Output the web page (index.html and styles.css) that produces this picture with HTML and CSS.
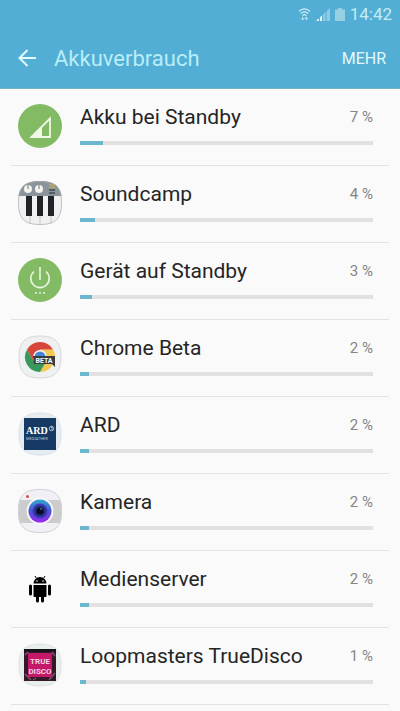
FILE: index.html
```html
<!DOCTYPE html>
<html lang="de">
<head>
    <meta charset="UTF-8">
    <meta name="viewport" content="width=device-width, initial-scale=1.0">
    <title>Akkuverbrauch</title>
    <link rel="stylesheet" href="styles.css">
</head>
<body>
    <header class="head">
        <!-- status bar -->
        <div class="status">
            <svg class="wifi" width="13" height="15" viewBox="0 0 14 15" fill="none" stroke="#d5f0f6" stroke-width="1.3">
                <path d="M1 4.2C4.5.4 9.500.4 13 4.200M3 6.500c2.300-2.400 5.700-2.400 8 0M5 8.700c1.200-1.200 2.800-1.200 4 0"/>
                <path d="M5 10v3M3.500 11.800L5 13.400l1.500-1.600M9 13.500v-3M7.500 12L9 10.300l1.500 1.700" stroke-width="1"/>
            </svg>
            <svg class="signal" width="14" height="13" viewBox="0 0 14 13">
                <path d="M0 13L14 0v13z" fill="#8ecbe2"/>
                <path d="M0 13L6 7.400V13z" fill="#def6fa"/>
                <path d="M3.500 8v5M6.500 5v8M10 2v11" stroke="#52aed4"/>
            </svg>
            <svg class="battery" width="10" height="13" viewBox="0 0 10 13" fill="#98d0e2">
                <path d="M3 0h4v1.500h3V13H0V1.500h3z"/>
            </svg>
            <span class="clock">14:42</span>
        </div>
        <!-- action bar -->
        <div class="bar">
            <a href="#" class="back" aria-label="Zurück">
                <svg width="20" height="20" viewBox="0 0 20 20" fill="none" stroke="#e3fafd" stroke-width="2">
                    <path d="M19 10H2.500M10.500 2l-8 8 8 8"/>
                </svg>
            </a>
            <h1>Akkuverbrauch</h1>
            <button type="button" class="more">MEHR</button>
        </div>
    </header>

    <ul class="list">
        <li>
            <svg class="icon" viewBox="0 0 44 44">
                <circle cx="22" cy="22" r="22" fill="#82bb64"/>
                <path d="M13.500 33L32 14.500V33z" fill="none" stroke="#f0f8e8" stroke-width="1.800"/>
                <path d="M13 33l11-11v11z" fill="#f0f8e8"/>
            </svg>
            <div class="info">
                <h2 id="n1">Akku bei Standby</h2><span class="num">7 %</span>
                <progress aria-labelledby="n1" max="100" value="8"></progress>
            </div>
        </li>
        <li>
            <svg class="icon" viewBox="0 0 44 44">
                <defs>
                    <clipPath id="tile"><path d="M22 0C38 0 44 6 44 22S38 44 22 44 0 38 0 22 6 0 22 0z"/></clipPath>
                </defs>
                <g clip-path="url(#tile)">
                    <path d="M0 0h44v44H0z" fill="#f1f1f2"/>
                    <path d="M0 0h44v15H0z" fill="#89949b"/>
                    <path d="M12 34v10M22 34v10M33 34v10" stroke="#c7c7c9"/>
                    <path d="M8 15h6v20H8zM19 15h6v20h-6zM30 15h6v20h-6z" fill="#222326"/>
                    <circle cx="10" cy="8" r="4" fill="#f4f3ed"/>
                    <circle cx="21" cy="8" r="4" fill="#f4f3ed"/>
                    <path d="M10 4v4M21 4v4" stroke="#777" stroke-width="1"/>
                    <path d="M31 4h6M31 6.500h6" stroke="#c2a860" stroke-width="1.500"/>
                    <path d="M31 9h6M31 12h6" stroke="#424e55" stroke-width="1.500"/>
                </g>
                <path d="M22 .5C37.500.5 43.500 6.500 43.500 22S37.500 43.500 22 43.500.5 37.500.5 22 6.500.5 22 .5z" fill="none" stroke="#a9adb0" stroke-opacity=".7"/>
            </svg>
            <div class="info">
                <h2 id="n2">Soundcamp</h2><span class="num">4 %</span>
                <progress aria-labelledby="n2" max="100" value="5"></progress>
            </div>
        </li>
        <li>
            <svg class="icon" viewBox="0 0 44 44">
                <circle cx="22" cy="22" r="22" fill="#82bb64"/>
                <path d="M22 9v13M16 13.500a9.200 9.200 0 1 0 12 0" fill="none" stroke="#e9f6df" stroke-width="1.600"/>
                <path d="M17 35h2M21 35h2M25 35h2" stroke="#e9f6df" stroke-width="1.600"/>
            </svg>
            <div class="info">
                <h2 id="n3">Gerät auf Standby</h2><span class="num">3 %</span>
                <progress aria-labelledby="n3" max="100" value="4"></progress>
            </div>
        </li>
        <li>
            <svg class="icon" viewBox="0 0 44 44">
                <path d="M22 1C37 1 43 7 43 22S37 43 22 43 1 37 1 22 7 1 22 1z" fill="#eff0f1" stroke="#d5d7d8"/>
                <path d="M22 14.500h13A15 15 0 0 1 22 37l6.500-11z" fill="#f4c94f"/>
                <path d="M9 14.500A15 15 0 0 0 22 37l6.500-11H15.500z" fill="#37985a"/>
                <path d="M9 14.500a15 15 0 0 1 26 0H22L15.500 26z" fill="#d8453a"/>
                <circle cx="22" cy="22" r="7" fill="#f4f6f7"/>
                <circle cx="22" cy="22" r="5.500" fill="#4385d6"/>
                <path d="M15 21h22v11l-3-3H16z" fill="#393c3c"/>
                <text x="26" y="28" class="beta">BETA</text>
            </svg>
            <div class="info">
                <h2 id="n4">Chrome Beta</h2><span class="num">2 %</span>
                <progress aria-labelledby="n4" max="100" value="3"></progress>
            </div>
        </li>
        <li>
            <svg class="icon" viewBox="0 0 44 44">
                <path d="M22 1C37 1 43 7 43 22S37 43 22 43 1 37 1 22 7 1 22 1z" fill="#e6edf2" stroke="#dae2e7"/>
                <path d="M6 6h32v32H6z" fill="#173a64"/>
                <text x="8" y="22" class="ard">ARD</text>
                <text x="8" y="28" class="mediathek">MEDIATHEK</text>
                <circle cx="33.500" cy="16.500" r="2.200" fill="none" stroke="#dce5ee" stroke-width=".8"/>
                <path d="M33 15.500l1-.5v3" fill="none" stroke="#dce5ee" stroke-width=".7"/>
            </svg>
            <div class="info">
                <h2 id="n5">ARD</h2><span class="num">2 %</span>
                <progress aria-labelledby="n5" max="100" value="3"></progress>
            </div>
        </li>
        <li>
            <svg class="icon" viewBox="0 0 44 44">
                <defs>
                    <linearGradient id="lens" x1="0" y1="0" x2="0" y2="1">
                        <stop offset="0" stop-color="#31a8cf"/>
                        <stop offset=".5" stop-color="#4b54d2"/>
                        <stop offset="1" stop-color="#9b28ec"/>
                    </linearGradient>
                </defs>
                <g clip-path="url(#tile)">
                    <path d="M0 0h44v44H0z" fill="#f1f0f4"/>
                    <path d="M0 11h44v23H0z" fill="#cdcccd"/>
                </g>
                <path d="M22 .5C37.500.5 43.500 6.500 43.500 22S37.500 43.500 22 43.500.5 37.500.5 22 6.500.5 22 .5z" fill="none" stroke="#d0d0dc"/>
                <circle cx="9.500" cy="7.500" r="1.500" fill="#cf5142"/>
                <circle cx="22" cy="22" r="13.500" fill="#f6f6fb"/>
                <circle cx="22" cy="22" r="11.500" fill="url(#lens)"/>
                <circle cx="22" cy="22" r="7.500" fill="#3e35b8"/>
                <circle cx="22" cy="22" r="5.500" fill="#202e72"/>
                <circle cx="22" cy="22" r="3.500" fill="#090b24"/>
                <circle cx="23" cy="20" r="1" fill="#506ba0"/>
            </svg>
            <div class="info">
                <h2 id="n6">Kamera</h2><span class="num">2 %</span>
                <progress aria-labelledby="n6" max="100" value="3"></progress>
            </div>
        </li>
        <li>
            <svg class="icon" viewBox="0 0 44 44">
                <path d="M15.500 17.500a6.500 6.500 0 0 1 13 0zM15.500 19h13v11a1 1 0 0 1-1 1h-11a1 1 0 0 1-1-1z"/>
                <path d="M12.500 20v8M31.500 20v8M19.500 30v5M24.500 30v5" stroke="#000" stroke-width="3" stroke-linecap="round"/>
                <path d="M18.500 12.500L17 10M25.500 12.500L27 10" stroke="#000"/>
                <circle cx="19" cy="15" r=".8" fill="#fff"/>
                <circle cx="25" cy="15" r=".8" fill="#fff"/>
            </svg>
            <div class="info">
                <h2 id="n7">Medienserver</h2><span class="num">2 %</span>
                <progress aria-labelledby="n7" max="100" value="3"></progress>
            </div>
        </li>
        <li>
            <svg class="icon" viewBox="0 0 44 44">
                <path d="M22 1C37 1 43 7 43 22S37 43 22 43 1 37 1 22 7 1 22 1z" fill="#e8eeec" stroke="#dce3e0"/>
                <path d="M6 6h32v32H6z" fill="#35192a"/>
                <path d="M6 6h32v3H6z" fill="#17131a"/>
                <path d="M7 31l6 6M31 37l6-7M7 12l3-3M34 9l3 4M15 37l3-2" stroke="#78546a" stroke-width="1.500"/>
                <path d="M10 10h24v24H10z" fill="#c51868"/>
                <text x="22" y="21" class="disco">TRUE</text>
                <text x="22" y="31" class="disco">DISCO</text>
            </svg>
            <div class="info">
                <h2 id="n8">Loopmasters TrueDisco</h2><span class="num">1 %</span>
                <progress aria-labelledby="n8" max="100" value="2"></progress>
            </div>
        </li>
    </ul>
</body>
</html>
```
FILE: styles.css
```css
*{
    margin: 0;
    padding: 0;
    list-style: none;
    box-sizing: border-box;
}

body{
    background-color: #fafafa;
    color: #252525;
    font-family: Roboto, "Liberation Sans", sans-serif;
}

.head{
    background-color: #52aed4;
    border-bottom: 1px solid #76b3c8;
}

/* status bar */
.status{
    height: 28px;
    padding-right: 8px;
    display: flex;
    justify-content: flex-end;
    align-items: center;
    gap: 5px;
}

.clock{
    font-size: 17px;
    line-height: 28px;
    color: #c5ebf5;
}

/* action bar */
.bar{
    height: 60px;
    padding: 0 14px 0 17px;
    display: flex;
    align-items: center;
}

.back{
    height: 20px;
}

.bar h1{
    flex: 1;
    margin-left: 17px;
    font-size: 22px;
    font-weight: normal;
    color: #b8edf8;
}

.more{
    border: 0;
    background: none;
    font-family: inherit;
    font-size: 16px;
    color: #e3fafd;
}

/* app list */
.list{
    padding: 0 11px;
}

.list li{
    height: 77px;
    padding: 15px 16px 0 7px;
    border-bottom: 1px solid #e3e3e3;
    display: flex;
    align-items: flex-start;
    gap: 18px;
}

.icon{
    width: 44px;
    height: 44px;
    flex: none;
}

.info{
    flex: 1;
    display: grid;
    grid-template-columns: 1fr auto;
    align-items: center;
    row-gap: 11px;
}

.info h2{
    font-size: 21px;
    line-height: 26px;
    font-weight: normal;
}

.num{
    font-size: 15px;
    line-height: 26px;
    color: #858585;
}

.info progress{
    grid-column: 1 / 3;
    width: 100%;
    height: 4px;
    display: block;
    border: 0;
    appearance: none;
    -webkit-appearance: none;
    background-color: #e3e0e1;
}

.info progress::-webkit-progress-bar{
    background-color: #e3e0e1;
}

.info progress::-webkit-progress-value{
    background-color: #6cb7ce;
}

/* lettering inside the app icons */
.beta{
    font: bold 7px Roboto, sans-serif;
    fill: #fff;
    text-anchor: middle;
}

.ard{
    font: bold 10px "Liberation Serif", serif;
    fill: #fff;
}

.mediathek{
    font: 4px Roboto, sans-serif;
    fill: #b9c8d9;
}

.disco{
    font: bold 8px "Liberation Sans Narrow", Roboto, sans-serif;
    fill: #f7d3e5;
    text-anchor: middle;
}
```
